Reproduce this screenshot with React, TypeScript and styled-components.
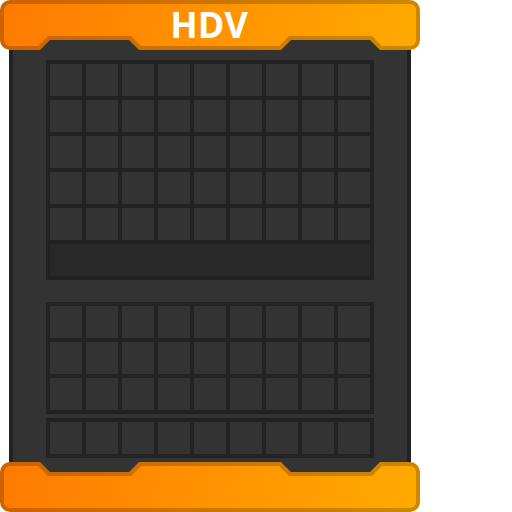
import React from "react";
import styled, { createGlobalStyle } from "styled-components";

const GlobalStyle = createGlobalStyle`
  *, *::before { box-sizing: border-box; }
  body {
    margin: 0;
    background: #ffffff;
    font-family: "Open Sans", "Noto Sans", sans-serif;
  }
`;

const Window = styled.main`
  display: flex;
  flex-direction: column;
  width: 100%;
  max-width: 420px;
`;

/* A plate with two notches on the side that faces the panel. */
const Plate = styled.div<{ $flip?: boolean }>`
  position: relative;
  z-index: 1;
  display: grid;
  place-items: center;
  height: 50px;
  border-radius: 10px;
  background: linear-gradient(100deg, #cc6200, #cc8800);
  clip-path: ${({ $flip }) =>
    $flip
      ? `polygon(0 0, 40px 0, 50px 10px, 129px 10px, 139px 0,
          calc(100% - 139px) 0, calc(100% - 129px) 10px, calc(100% - 50px) 10px, calc(100% - 40px) 0,
          100% 0, 100% 100%, 0 100%)`
      : `polygon(0 0, 100% 0, 100% 100%, calc(100% - 40px) 100%, calc(100% - 50px) 40px,
          calc(100% - 129px) 40px, calc(100% - 139px) 100%, 139px 100%, 129px 40px,
          50px 40px, 40px 100%, 0 100%)`};

  &::before {
    content: "";
    position: absolute;
    inset: 4px;
    border-radius: 6px;
    background: linear-gradient(100deg, #ff7b00, #ffaa00);
    clip-path: ${({ $flip }) =>
      $flip
        ? `polygon(0 0, 34px 0, 44px 10px, 127px 10px, 137px 0,
            calc(100% - 137px) 0, calc(100% - 127px) 10px, calc(100% - 44px) 10px, calc(100% - 34px) 0,
            100% 0, 100% 100%, 0 100%)`
        : `polygon(0 0, 100% 0, 100% 100%, calc(100% - 34px) 100%, calc(100% - 44px) 32px,
            calc(100% - 127px) 32px, calc(100% - 137px) 100%, 137px 100%, 127px 32px,
            44px 32px, 34px 100%, 0 100%)`};
  }
`;

const Title = styled.h1`
  position: relative;
  margin: 0;
  padding: 0 2px 0 0;
  color: #ffffff;
  font-size: 36px;
  font-weight: 700;
  line-height: 48px;
`;

const Panel = styled.div`
  margin: -10px 9px;
  padding: 20px 33px 14px;
  border: solid #222222;
  border-width: 0 4px;
  background: #333333;
`;

const SlotGrid = styled.div`
  display: grid;
  grid-template-columns: repeat(9, 1fr);
  grid-auto-rows: 32px;
  gap: 4px;
  padding: 4px;
  background: #222222;
`;

const Storage = styled(SlotGrid)`
  margin-bottom: 22px;
`;

const Backpack = styled(SlotGrid)`
  margin-bottom: 4px;
`;

const Slot = styled.div`
  background: #333333;
`;

const Tray = styled.div`
  grid-column: 1 / -1;
  background: #282828;
`;

const COLUMNS = 9;

function Slots({ rows }: { rows: number }) {
  return (
    <>
      {Array.from({ length: rows * COLUMNS }, (_, i) => (
        <Slot key={i} />
      ))}
    </>
  );
}

export default function App() {
  return (
    <>
      <GlobalStyle />
      <Window>
        <Plate as="header">
          <Title>HDV</Title>
        </Plate>
        <Panel>
          <Storage>
            <Slots rows={5} />
            <Tray />
          </Storage>
          <Backpack>
            <Slots rows={3} />
          </Backpack>
          <SlotGrid>
            <Slots rows={1} />
          </SlotGrid>
        </Panel>
        <Plate as="footer" $flip />
      </Window>
    </>
  );
}
